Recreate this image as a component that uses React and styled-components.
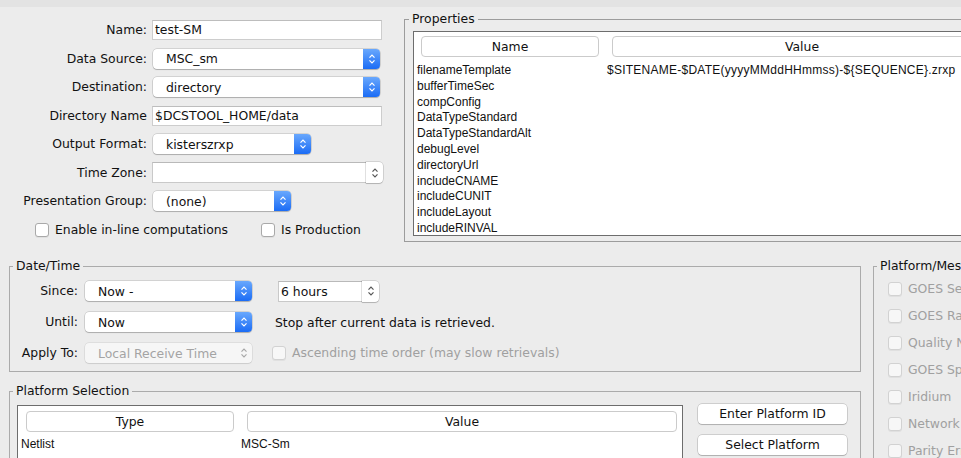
import React from 'react';
import styled, { createGlobalStyle } from 'styled-components';

const GlobalStyle = createGlobalStyle`
  html, body {
    margin: 0;
    padding: 0;
    background: #ececec;
    overflow: hidden;
  }
  body {
    font-family: "DejaVu Sans", sans-serif;
    font-size: 12.4px;
    color: #111;
  }
`;

const Window = styled.div`
  width: 1100px;
  height: 458px;
  background: #ececec;
`;

const TopStrip = styled.div`
  height: 7px;
  background: #e3e3e3;
`;

const TopRow = styled.div`
  display: flex;
  align-items: flex-start;
`;

const FormCol = styled.div`
  width: 404px;
  flex: none;
  padding-top: 13px;
  box-sizing: border-box;
`;

const FormGrid = styled.div`
  display: grid;
  grid-template-columns: 147px auto;
  column-gap: 5px;
  grid-auto-rows: 20px;
  row-gap: 8.5px;
  align-items: center;
`;

const Label = styled.div`
  text-align: right;
  white-space: nowrap;
  line-height: 20px;
`;

const TextField = styled.div`
  width: ${p => p.$w}px;
  height: 20px;
  box-sizing: border-box;
  background: #fff;
  border: 1px solid #cdcdcd;
  border-top-color: #bdbdbd;
  padding-left: 2px;
  line-height: 18px;
  white-space: nowrap;
`;

const Combo = styled.div`
  width: ${p => p.$w}px;
  height: 20px;
  margin-left: 1px;
  display: flex;
  align-items: center;
  box-sizing: border-box;
  background: ${p => (p.$disabled ? '#f6f6f6' : '#fff')};
  color: ${p => (p.$disabled ? '#a4a4a4' : '#111')};
  border-radius: 4px;
  box-shadow: 0 0 0 0.5px rgba(0, 0, 0, ${p => (p.$disabled ? 0.12 : 0.22)}),
    0 1px 1px rgba(0, 0, 0, ${p => (p.$disabled ? 0.08 : 0.18)});
  overflow: hidden;
`;

const ComboText = styled.span`
  flex: 1;
  padding-left: 13px;
  white-space: nowrap;
`;

const ComboArrow = styled.span`
  width: 17px;
  height: 100%;
  flex: none;
  display: flex;
  align-items: center;
  justify-content: center;
  background: ${p =>
    p.$disabled ? 'transparent' : 'linear-gradient(#69a8fd, #1b6cf5)'};
`;

const EditCombo = styled.div`
  width: ${p => p.$w}px;
  height: 21px;
  display: flex;
  box-sizing: border-box;
  margin-left: ${p => p.$ml || 0}px;
`;

const EditText = styled.div`
  flex: 1;
  background: #fff;
  border: 1px solid #c9c9c9;
  border-right: none;
  border-top-color: #b9b9b9;
  padding-left: 2px;
  line-height: 19px;
  white-space: nowrap;
`;

const EditArrow = styled.div`
  width: 17px;
  flex: none;
  display: flex;
  align-items: center;
  justify-content: center;
  background: #fff;
  border-radius: 0 4px 4px 0;
  box-shadow: 0 0 0 0.5px rgba(0, 0, 0, 0.22), 0 1px 1px rgba(0, 0, 0, 0.15);
`;

const CheckRow = styled.div`
  display: flex;
  align-items: center;
  margin-top: 12px;
  padding-left: 35px;
  height: 14px;
`;

const CheckItem = styled.label`
  display: flex;
  align-items: center;
  width: ${p => (p.$w ? `${p.$w}px` : 'auto')};
  margin-left: ${p => p.$ml || 0}px;
  color: ${p => (p.$disabled ? '#a0a0a0' : '#111')};
  white-space: nowrap;
  line-height: 14px;
`;

const Box = styled.span`
  width: 14px;
  height: 14px;
  box-sizing: border-box;
  flex: none;
  margin-right: 6px;
  border-radius: 3px;
  background: ${p => (p.$disabled ? '#f7f7f7' : '#fff')};
  border: 1px solid ${p => (p.$disabled ? '#d2d2d2' : '#a9a9a9')};
  box-shadow: 0 1px 0 rgba(0, 0, 0, 0.05);
`;

const Group = styled.fieldset`
  margin: 0;
  min-width: 0;
  box-sizing: border-box;
  border: 1px solid ${p => p.$border || '#ababab'};
  width: ${p => p.$w}px;
  padding: ${p => p.$pad};
  margin-left: ${p => p.$ml || 0}px;
  flex: none;
`;

const Legend = styled.legend`
  padding: 0 3px;
  margin-left: ${p => p.$ml}px;
  line-height: 14px;
  font-size: 12.4px;
  color: #111;
  white-space: nowrap;
`;

const PropsGroup = styled(Group)`
  margin-top: 5px;
`;

const Table = styled.div`
  background: #fff;
  border: 1px solid #6d6d6d;
  box-sizing: border-box;
  height: ${p => p.$h}px;
  width: ${p => (p.$w ? `${p.$w}px` : 'auto')};
  margin-left: ${p => p.$ml || 0}px;
  overflow: hidden;
  flex: none;
`;

const HeaderRow = styled.div`
  display: flex;
  gap: 13px;
  padding: ${p => p.$pad};
`;

const HeaderCell = styled.div`
  width: ${p => p.$w}px;
  height: 21px;
  box-sizing: border-box;
  flex: none;
  border: 1px solid #cbcbcb;
  border-radius: 4px;
  text-align: center;
  line-height: 19px;
  background: #fff;
`;

const Rows = styled.div`
  margin-top: ${p => p.$mt}px;
  font-family: "Liberation Sans", Arial, sans-serif;
  font-size: 12px;
  color: #111;
`;

const Row = styled.div`
  display: grid;
  grid-template-columns: ${p => p.$col}px 1fr;
  padding-left: ${p => p.$pl}px;
  line-height: ${p => p.$lh}px;
  white-space: nowrap;
`;

const Value = styled.span`
  letter-spacing: ${p => p.$ls || 0}px;
`;

const BottomRow = styled.div`
  display: flex;
  align-items: flex-start;
  margin-top: 17px;
`;

const LeftCol = styled.div`
  margin-left: 9px;
  display: flex;
  flex-direction: column;
  gap: 12px;
  flex: none;
`;

const DateGrid = styled.div`
  display: grid;
  grid-template-columns: 68px 168px 1fr;
  column-gap: 6px;
  grid-auto-rows: 20px;
  row-gap: 11px;
  align-items: center;
`;

const Note = styled.div`
  margin-left: ${p => p.$ml}px;
  white-space: nowrap;
`;

const PlatformBody = styled.div`
  display: flex;
  align-items: flex-start;
`;

const ButtonCol = styled.div`
  display: flex;
  flex-direction: column;
  gap: 11px;
  margin-left: 15px;
  margin-top: -1px;
`;

const Button = styled.div`
  width: 149px;
  height: 20px;
  box-sizing: border-box;
  background: #fff;
  border-radius: 4px;
  box-shadow: 0 0 0 0.5px rgba(0, 0, 0, 0.25), 0 1px 1px rgba(0, 0, 0, 0.15);
  text-align: center;
  line-height: 20px;
`;

const MsgList = styled.div`
  display: flex;
  flex-direction: column;
  gap: 13px;
  padding: 9px 0 0 14px;
`;

const Chevrons = ({ color }) => (
  <svg width="8" height="12" viewBox="0 0 8 12">
    <path d="M1.5 4.6 L4 2 L6.5 4.6" fill="none" stroke={color} strokeWidth="1.2" />
    <path d="M1.5 7.4 L4 10 L6.5 7.4" fill="none" stroke={color} strokeWidth="1.2" />
  </svg>
);

const Select = ({ w, value, disabled }) => (
  <Combo $w={w} $disabled={disabled}>
    <ComboText>{value}</ComboText>
    <ComboArrow $disabled={disabled}>
      <Chevrons color={disabled ? '#a8a8a8' : '#fff'} />
    </ComboArrow>
  </Combo>
);

const EditSelect = ({ w, ml, value }) => (
  <EditCombo $w={w} $ml={ml}>
    <EditText>{value}</EditText>
    <EditArrow>
      <Chevrons color="#555" />
    </EditArrow>
  </EditCombo>
);

const properties = [
  ['filenameTemplate', '$SITENAME-$DATE(yyyyMMddHHmmss)-${SEQUENCE}.zrxp'],
  ['bufferTimeSec', ''],
  ['compConfig', ''],
  ['DataTypeStandard', ''],
  ['DataTypeStandardAlt', ''],
  ['debugLevel', ''],
  ['directoryUrl', ''],
  ['includeCNAME', ''],
  ['includeCUNIT', ''],
  ['includeLayout', ''],
  ['includeRINVAL', ''],
];

const messageTypes = [
  'GOES Self Timed',
  'GOES Random',
  'Quality Notifications',
  'GOES Spare',
  'Iridium',
  'Network DCP',
  'Parity Errors',
];

export default function App() {
  return (
    <Window>
      <GlobalStyle />
      <TopStrip />
      <TopRow>
        <FormCol>
          <FormGrid>
            <Label>Name:</Label>
            <TextField $w={230}>test-SM</TextField>
            <Label>Data Source:</Label>
            <Select w={227} value="MSC_sm" />
            <Label>Destination:</Label>
            <Select w={227} value="directory" />
            <Label>Directory Name</Label>
            <TextField $w={230}>$DCSTOOL_HOME/data</TextField>
            <Label>Output Format:</Label>
            <Select w={158} value="kisterszrxp" />
            <Label>Time Zone:</Label>
            <EditSelect w={231} value="" />
            <Label>Presentation Group:</Label>
            <Select w={138} value="(none)" />
          </FormGrid>
          <CheckRow>
            <CheckItem $w={226}>
              <Box />
              Enable in-line computations
            </CheckItem>
            <CheckItem>
              <Box />
              Is Production
            </CheckItem>
          </CheckRow>
        </FormCol>

        <PropsGroup $w={620} $pad="5px 8px 5px 8px" $border="#9c9c9c">
          <Legend $ml={-4}>Properties</Legend>
          <Table $h={205}>
            <HeaderRow $pad="4px 0 0 7px">
              <HeaderCell $w={178}>Name</HeaderCell>
              <HeaderCell $w={380}>Value</HeaderCell>
            </HeaderRow>
            <Rows $mt={6}>
              {properties.map(([name, value]) => (
                <Row key={name} $col={190} $pl={3} $lh={15.8}>
                  <span>{name}</span>
                  <Value $ls={0.25}>{value}</Value>
                </Row>
              ))}
            </Rows>
          </Table>
        </PropsGroup>
      </TopRow>

      <BottomRow>
        <LeftCol>
          <Group $w={852} $pad="8px 0 8px 0">
            <Legend $ml={3}>Date/Time</Legend>
            <DateGrid>
              <Label>Since:</Label>
              <Select w={167} value="Now -" />
              <EditSelect w={101} ml={20} value="6 hours" />
              <Label>Until:</Label>
              <Select w={167} value="Now" />
              <Note $ml={17}>Stop after current data is retrieved.</Note>
              <Label>Apply To:</Label>
              <Select w={167} value="Local Receive Time" disabled />
              <CheckItem $ml={14} $disabled>
                <Box $disabled />
                Ascending time order (may slow retrievals)
              </CheckItem>
            </DateGrid>
          </Group>

          <Group $w={852} $pad="7px 0 0 0">
            <Legend $ml={3}>Platform Selection</Legend>
            <PlatformBody>
              <Table $h={80} $w={666} $ml={7}>
                <HeaderRow $pad="5px 0 0 8px">
                  <HeaderCell $w={208}>Type</HeaderCell>
                  <HeaderCell $w={430}>Value</HeaderCell>
                </HeaderRow>
                <Rows $mt={4}>
                  <Row $col={220} $pl={3} $lh={16}>
                    <span>Netlist</span>
                    <span>MSC-Sm</span>
                  </Row>
                </Rows>
              </Table>
              <ButtonCol>
                <Button>Enter Platform ID</Button>
                <Button>Select Platform</Button>
              </ButtonCol>
            </PlatformBody>
          </Group>
        </LeftCol>

        <Group $w={220} $pad="0" $ml={12}>
          <Legend $ml={3}>Platform/Message Types</Legend>
          <MsgList>
            {messageTypes.map(t => (
              <CheckItem key={t} $disabled>
                <Box $disabled />
                {t}
              </CheckItem>
            ))}
          </MsgList>
        </Group>
      </BottomRow>
    </Window>
  );
}
